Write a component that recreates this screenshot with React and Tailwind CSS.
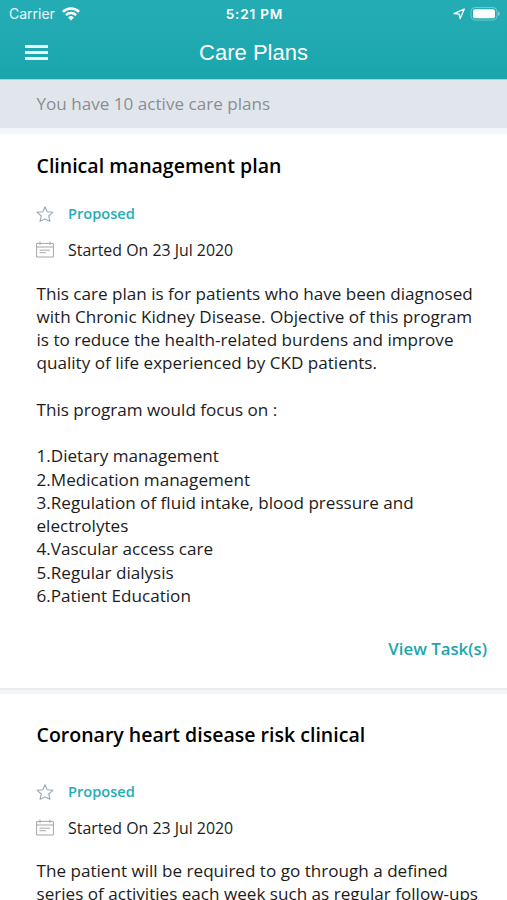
const plans = [
  {
    id: 1,
    title: 'Clinical management plan',
    status: 'Proposed',
    started: '23 Jul 2020',
    headClass: 'pt-[18px] pb-[20px]',
    lines: [
      'This care plan is for patients who have been diagnosed',
      'with Chronic Kidney Disease. Objective of this program',
      'is to reduce the health-related burdens and improve',
      'quality of life experienced by CKD patients.',
      '',
      'This program would focus on :',
      '',
      '1.Dietary management',
      '2.Medication management',
      '3.Regulation of fluid intake, blood pressure and',
      'electrolytes',
      '4.Vascular access care',
      '5.Regular dialysis',
      '6.Patient Education',
    ],
  },
  {
    id: 2,
    title: 'Coronary heart disease risk clinical',
    status: 'Proposed',
    started: '23 Jul 2020',
    headClass: 'pt-[27px] pb-[29px]',
    lines: [
      'The patient will be required to go through a defined',
      'series of activities each week such as regular follow-ups',
    ],
  },
];

function WifiIcon() {
  return (
    <svg className="ml-[7px] h-[14px] w-[18px]" viewBox="0 0 18 14" fill="none" stroke="white" strokeWidth="2.5">
      <path d="M0.9 4.9a11.5 11.5 0 0 1 16.2 0" />
      <path d="M3.9 8.1a7.2 7.2 0 0 1 10.2 0" />
      <path d="M6.1 10.5a4.1 4.1 0 0 1 5.8 0L9 13.4z" fill="white" stroke="none" />
    </svg>
  );
}

function BatteryIcon() {
  return (
    <svg className="h-[14px] w-[30px]" viewBox="0 0 30 14" fill="none">
      <rect x="1" y="0.5" width="26" height="12.6" rx="4" stroke="white" strokeOpacity="0.35" />
      <rect x="3" y="2.3" width="22" height="9" rx="2" fill="white" />
      <path d="M28.2 4.5c2 .8 2 3.8 0 4.6z" fill="white" fillOpacity="0.5" />
    </svg>
  );
}

function StarIcon() {
  return (
    <svg className="h-[18px] w-[18px]" viewBox="0 0 18 18" fill="none" stroke="#9aa9b1" strokeWidth="1.1" strokeLinejoin="round">
      <path d="M9 1.8l2.2 4.9 5.7.6-4.2 3.7 1.3 5.3L9 14.1l-5 2.2L5.3 11 1.1 7.3l5.7-.6z" />
    </svg>
  );
}

function CalendarIcon() {
  return (
    <svg className="h-[18px] w-[18px]" viewBox="0 0 18 18" fill="none" stroke="#a3a5a8" strokeWidth="1">
      <path d="M.6 2.4h16.8V16H.6zM.6 6h16.8M4 .5v3.4M14 .5v3.4M3.5 9.2H14M3.5 11.7H10" />
    </svg>
  );
}

function Header() {
  return (
    <header className="h-[80px] shrink-0 border-b border-[#8fdadd] bg-linear-to-b from-[#25adb5] to-[#1aa5ad] font-['Liberation_Sans',sans-serif] text-white">
      <div className="grid h-[27px] grid-cols-3 items-center pr-[7px] pl-[9px]">
        <div className="flex items-center">
          <span className="font-['Inter',sans-serif] text-[14px] text-white/90">Carrier</span>
          <WifiIcon />
        </div>
        <span className="pt-px text-center font-['Inter',sans-serif] text-[13.6px] font-semibold tracking-[0.8px]">5:21 PM</span>
        <div className="flex items-center justify-end gap-[5px]">
          <svg className="h-[12px] w-[12px]" viewBox="0 0 12 12" fill="none" stroke="white" strokeWidth="1.3" strokeLinejoin="round">
            <path d="M11.3 1L7.2 10.6 6.2 6.2 1 5.6z" />
          </svg>
          <BatteryIcon />
        </div>
      </div>
      <div className="grid h-[50px] grid-cols-[1fr_auto_1fr] items-center px-[25px]">
        <button type="button" aria-label="Menu" className="flex w-[23px] flex-col gap-[3px]">
          <span className="h-[3px] bg-white/90" />
          <span className="h-[3px] bg-white/90" />
          <span className="h-[3px] bg-white/90" />
        </button>
        <h1 className="text-[22px]">Care Plans</h1>
        <span />
      </div>
    </header>
  );
}

function PlanCard({ plan }) {
  return (
    <section className="bg-white">
      <div className="pr-5 pl-[36.5px]">
        <h2 className={`text-[19.55px] leading-7 font-semibold whitespace-nowrap text-black ${plan.headClass}`}>{plan.title}</h2>
        <div className="-ml-[0.5px] flex h-[28px] items-center gap-[14px]">
          <StarIcon />
          <span className="pb-[2px] text-[14.6px] leading-5 font-semibold text-[#22adb5]">{plan.status}</span>
        </div>
        <div className="mt-2 -ml-[0.5px] flex h-[28px] items-center gap-[14px]">
          <CalendarIcon />
          <span className="text-[15.9px] leading-6">Started On {plan.started}</span>
        </div>
        <div className="mt-[17.5px] text-[17.1px] leading-[23.27px] whitespace-nowrap">
          {plan.lines.map((line, i) => (
            <p key={i} className="h-[23.27px]">{line}</p>
          ))}
        </div>
        <div className="mt-[29.5px] flex h-[51px] items-start justify-end">
          <button type="button" className="text-[16.8px] leading-6 font-semibold text-[#1ba6ae]">View Task(s)</button>
        </div>
      </div>
      <div className="h-[6px] border-t-2 border-[#e9ecf0] bg-[#f3f5f8]" />
    </section>
  );
}

export default function App() {
  return (
    <div className="flex h-[900px] w-[507px] flex-col overflow-hidden bg-white font-['Open_Sans',sans-serif] text-[#1c1c1c]">
      <Header />
      <div className="flex h-[48px] shrink-0 items-center bg-[#e1e6ed] pl-[36.5px] text-[17.1px] text-[#8b8e91]">
        You have 10 active care plans
      </div>
      <div className="h-[6px] shrink-0 bg-[#f3f7fa]" />
      <main className="min-h-0 flex-1 overflow-hidden">
        {plans.map((plan) => (
          <PlanCard key={plan.id} plan={plan} />
        ))}
      </main>
    </div>
  );
}
